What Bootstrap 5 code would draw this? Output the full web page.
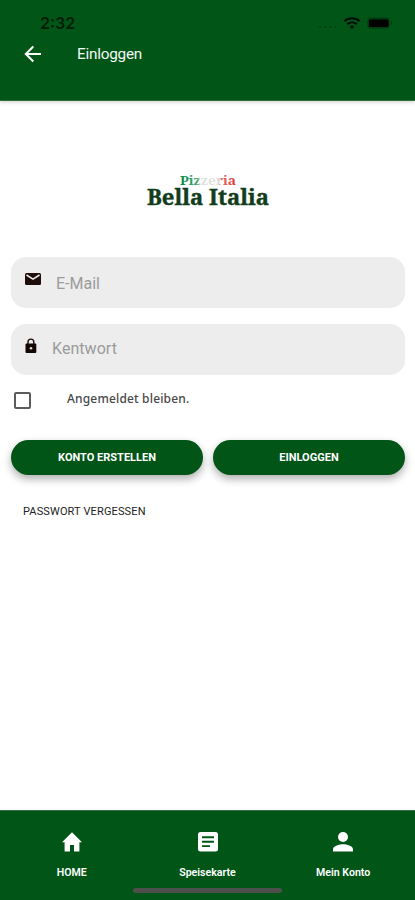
<!DOCTYPE html>
<html lang="de">
<head>
<meta charset="utf-8">
<meta name="viewport" content="width=device-width, initial-scale=1">
<title>Einloggen</title>
<link href="https://cdn.jsdelivr.net/npm/bootstrap@5.3.0/dist/css/bootstrap.min.css" rel="stylesheet">
<style>
  body { font-family: Roboto, "Liberation Sans", sans-serif; height: 900px; overflow: hidden; }
  svg { display: block; flex: none; }
  .brand-green { background: #005517; }
  .app-header { height: 101px; border-bottom: 1px solid #2f6a38; box-shadow: 0 1px 4px rgba(0,0,0,.2); }
  .status-row { height: 30px; padding: 9px 22px 0 40px; }
  .clock { font: 600 16px/28px Inter, sans-serif; color: #001d05; }
  .signal { color: #00400f; width: 20px; height: 2px; margin-top: 17px; }
  .wifi { margin: 8px 0 0 5px; }
  .battery { margin: 8px 0 0 6px; }
  .title-row { height: 48px; padding-left: 24px; }
  .page-title { font-size: 15.3px; letter-spacing: -.22px; margin-left: 35px; color: #f2f7f2; }
  .logo-wrap { padding-top: 70px; height: 156.400px; }
  .login-form { padding: 0 10px 0 11px; }
  .field { height: 51px; border-radius: 15px; background: #ededed; padding-left: 13px; }
  .field + .field { margin-top: 15.600px; }
  .field .form-control { color: #999; font-size: 16px; line-height: 20px; padding: 2px 0 0; }
  .field .form-control::placeholder { color: #9b9b9b; opacity: 1; }
  .mail-icon { margin-top: 15px; }
  .lock-icon { margin-top: 14px; }
  .mail-input { margin-left: 14px; }
  .field .lock-input { margin-left: 14px; letter-spacing: .05px; padding-top: 0; }
  .remember { height: 65px; padding: 17px 0 0 3px; }
  .remember .form-check-input { width: 17px; height: 17px; border: 2px solid #5c5c5c; border-radius: 2px; margin: 0; }
  .remember label { font: 500 12px/14px "Noto Sans", sans-serif; letter-spacing: .17px; color: #484848; margin-left: 36px; }
  .pill-row { gap: 10px; }
  .btn-pill { height: 35px; border-radius: 18px; color: #fff; font-size: 11px; font-weight: 700; line-height: 1; box-shadow: 0 4px 8px rgba(0,0,0,.32); padding: 0; }
  .btn-pill:hover { color: #fff; background: #00440f; }
  .forgot { font-size: 11px; line-height: 14px; color: #222; margin: 30px 0 0 12px; letter-spacing: .14px; }
  .tabs { height: 90px; border-top: 1px solid #397044; padding: 19px 4px 0; }
  .tab-link { color: #fff; font-size: 10.6px; font-weight: 600; line-height: 14px; gap: 10px; }
  .home-bar { width: 149px; height: 5px; border-radius: 3px; background: #4d4f4d; left: 133px; bottom: 7px; }
</style>
<script src="https://cdn.jsdelivr.net/npm/bootstrap@5.3.0/dist/js/bootstrap.bundle.min.js"></script>
</head>
<body class="bg-white d-flex flex-column">
<header class="app-header brand-green flex-shrink-0">
  <div class="status-row d-flex">
    <span class="clock">2:32</span>
    <div class="d-flex ms-auto">
      <svg class="signal" viewBox="0 0 20 2" fill="currentColor"><circle cx="2" cy="1" r="1"/><circle cx="7.2" cy="1" r="1"/><circle cx="12.4" cy="1" r="1"/><circle cx="17.6" cy="1" r="1"/></svg>
      <svg class="wifi" width="18" height="13" viewBox="0 0 18 13" fill="none" stroke="#000c02" stroke-width="2.1"><path d="M1.400 4.300C5.800.3 12.200.3 16.600 4.300M4.200 7.300c2.800-2.400 6.800-2.400 9.600 0"/><path d="M6.500 9.400c1.400-1.200 3.600-1.200 5 0L9 12z" fill="#000c02" stroke="none"/></svg>
      <svg class="battery" width="26" height="12" viewBox="0 0 26 12"><rect x=".5" y=".5" width="22" height="11" rx="3" fill="#003b0e"/><rect x="2" y="2.500" width="19.500" height="7.500" rx="1.500" fill="#000"/><path d="M24 4v4c1.500-.6 1.500-3.400 0-4z" fill="#00380d"/></svg>
    </div>
  </div>
  <div class="title-row d-flex align-items-center">
    <svg width="18" height="18" viewBox="0 0 18 18" fill="none" stroke="#fff" stroke-width="2"><path d="M17 9H2.500M9.300 1.500 1.800 9l7.500 7.500"/></svg>
    <h1 class="page-title fw-normal mb-0">Einloggen</h1>
  </div>
</header>
<main class="flex-grow-1">
  <div class="logo-wrap d-flex justify-content-center">
    <svg width="124" height="40" viewBox="0 0 124 40" font-family="'Noto Serif','DejaVu Serif',serif" font-weight="700" role="img" aria-label="Pizzeria Bella Italia">
      <defs><linearGradient id="flag"><stop offset="0" stop-color="#078747"/><stop offset=".32" stop-color="#4aa878"/><stop offset=".36" stop-color="#dedede"/><stop offset=".68" stop-color="#e5e2e2"/><stop offset=".74" stop-color="#e76b62"/><stop offset="1" stop-color="#db3932"/></linearGradient></defs>
      <text x="34" y="13.500" font-size="12" textLength="56" lengthAdjust="spacingAndGlyphs" fill="url(#flag)">Pizzeria</text>
      <text x="1" y="34.300" font-size="21" textLength="122" lengthAdjust="spacingAndGlyphs" fill="#123d1b" stroke="#123d1b" stroke-width=".4">Bella Italia</text>
    </svg>
  </div>
  <form class="login-form">
    <div class="field d-flex">
      <svg class="mail-icon" width="18" height="14" viewBox="0 0 18 14"><rect x="1" y="1" width="16" height="12" rx="1.500" fill="#1e0d08"/><path d="m2.500 3 6.500 4.200L15.500 3" fill="none" stroke="#ededed" stroke-width="1.500"/></svg>
      <input class="form-control border-0 bg-transparent shadow-none mail-input" type="email" placeholder="E-Mail" aria-label="E-Mail">
    </div>
    <div class="field d-flex">
      <svg class="lock-icon" width="14" height="16" viewBox="0 0 14 16"><path d="M4 7V4a2.900 2.900 0 0 1 5.800 0V7" fill="none" stroke="#1e0d08" stroke-width="1.400"/><rect x="1.500" y="5.500" width="10.800" height="9.500" rx="1" fill="#150704"/><circle cx="7" cy="10.200" r="1.300" fill="#ddd"/></svg>
      <input class="form-control border-0 bg-transparent shadow-none lock-input" type="password" placeholder="Kentwort" aria-label="Kentwort">
    </div>
    <div class="remember d-flex">
      <input class="form-check-input" type="checkbox" id="stay">
      <label for="stay">Angemeldet bleiben.</label>
    </div>
    <div class="row g-0 pill-row">
      <div class="col"><button type="button" class="btn btn-pill brand-green border-0 w-100">KONTO ERSTELLEN</button></div>
      <div class="col"><button type="button" class="btn btn-pill brand-green border-0 w-100">EINLOGGEN</button></div>
    </div>
    <a href="#" class="forgot d-inline-block text-decoration-none">PASSWORT VERGESSEN</a>
  </form>
</main>
<nav class="tabs brand-green flex-shrink-0 position-relative">
  <div class="row g-0 text-center">
    <a href="#" class="tab-link col d-flex flex-column align-items-center text-decoration-none">
      <svg width="24" height="26" viewBox="0 0 24 26" fill="#fff"><path d="M12 2.300 2 12.300h2.600v9.200h5.400v-6.500h4v6.500h5.400v-9.200H22z"/></svg>HOME</a>
    <a href="#" class="tab-link col d-flex flex-column align-items-center text-decoration-none">
      <svg width="24" height="26" viewBox="0 0 24 26"><rect x="2" y="2" width="20" height="19.500" rx="2.500" fill="#fff"/><path d="M6 7.300h12M6 11.700h12M6 16.100h8" stroke="#005517" stroke-width="1.900"/></svg>Speisekarte</a>
    <a href="#" class="tab-link col d-flex flex-column align-items-center text-decoration-none">
      <svg width="24" height="26" viewBox="0 0 24 26" fill="#fff"><circle cx="12" cy="7" r="5"/><path d="M2 21.500v-2.300c0-3.400 6.500-5 10-5s10 1.600 10 5v2.300z"/></svg>Mein Konto</a>
  </div>
  <div class="home-bar position-absolute"></div>
</nav>
</body>
</html>
